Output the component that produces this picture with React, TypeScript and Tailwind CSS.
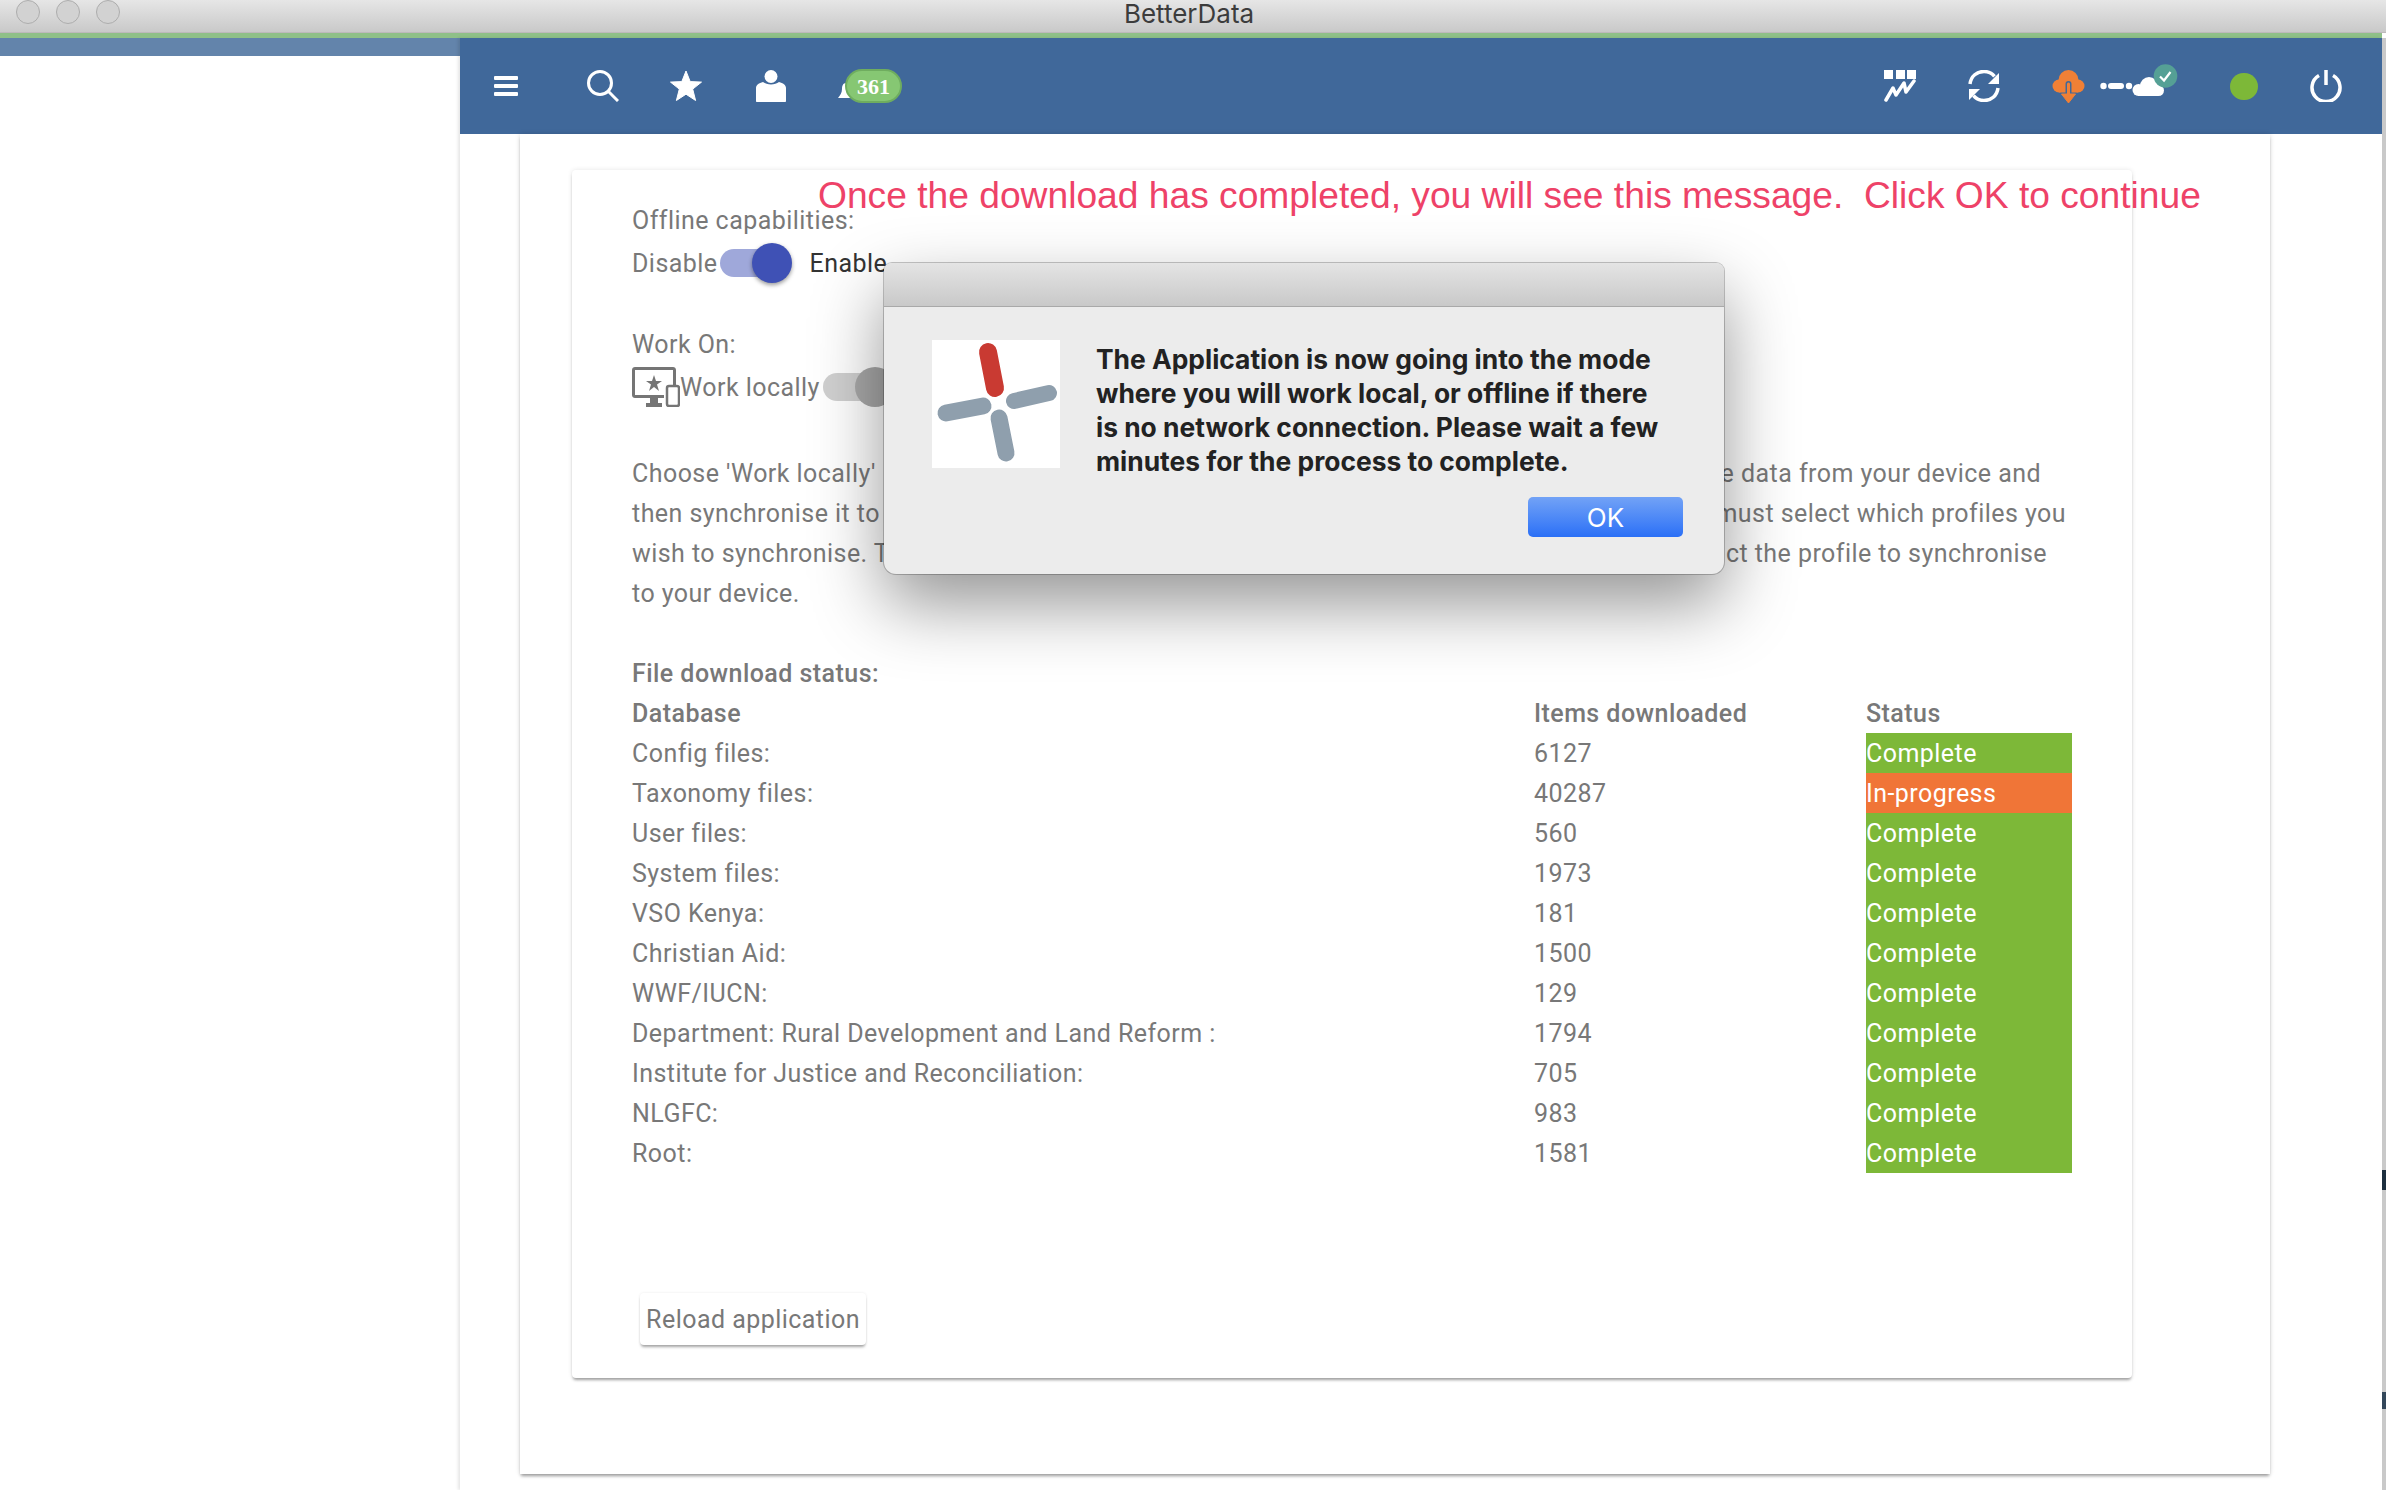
const files = [
  { name: "Config files:", count: "6127", done: true },
  { name: "Taxonomy files:", count: "40287", done: false },
  { name: "User files:", count: "560", done: true },
  { name: "System files:", count: "1973", done: true },
  { name: "VSO Kenya:", count: "181", done: true },
  { name: "Christian Aid:", count: "1500", done: true },
  { name: "WWF/IUCN:", count: "129", done: true },
  { name: "Department: Rural Development and Land Reform :", count: "1794", done: true },
  { name: "Institute for Justice and Reconciliation:", count: "705", done: true },
  { name: "NLGFC:", count: "983", done: true },
  { name: "Root:", count: "1581", done: true },
]

function MenuIcon() {
  return (
    <svg width="24" height="20" viewBox="0 0 24 20" fill="#fff">
      <rect x="0" y="0" width="24" height="4" rx="1" />
      <rect x="0" y="8" width="24" height="4" rx="1" />
      <rect x="0" y="16" width="24" height="4" rx="1" />
    </svg>
  )
}

function SearchIcon() {
  return (
    <svg width="32" height="32" viewBox="0 0 32 32" fill="none" stroke="#fff" strokeWidth="3">
      <circle cx="13" cy="13" r="11.5" />
      <path d="M21 21l10 10" />
    </svg>
  )
}

function StarIcon() {
  return (
    <svg width="32" height="32" viewBox="0 0 32 32" fill="#fff" stroke="#fff" strokeWidth="1" strokeLinejoin="round">
      <path d="M16 1l4.200 10.600 11.300.5-8.800 7 2.900 11.400L16 24.200 6.400 30.500l2.900-11.400-8.800-7 11.300-.5z" />
    </svg>
  )
}

function UserIcon() {
  return (
    <svg width="32" height="32" viewBox="0 0 32 32" fill="#fff">
      <circle cx="16" cy="6.500" r="6.500" />
      <path d="M1 31V18c0-3 3-5 7-6 2 1.500 5 2.500 8 2.500s6-1 8-2.500c4 1 7 3 7 6v13c0 .6-.4 1-1 1H2c-.6 0-1-.4-1-1z" />
    </svg>
  )
}

function ChartIcon() {
  return (
    <svg width="32" height="32" viewBox="0 0 32 32" fill="none">
      <rect x="0" y="0" width="9" height="9" fill="#fff" />
      <rect x="12" y="0" width="9" height="9" fill="#fff" />
      <rect x="23" y="0" width="9" height="9" fill="#fff" />
      <path d="M2 30l7-12 3 7 8-12 2 9 8-11" stroke="#fff" strokeWidth="3.500" strokeLinejoin="round" strokeLinecap="round" />
    </svg>
  )
}

function SyncIcon() {
  return (
    <svg width="32" height="32" viewBox="0 0 32 32" fill="none">
      <path d="M2 14C3 6 9 1.500 16 1.500c4.500 0 8 1.800 10.500 4.800" stroke="#fff" strokeWidth="3.500" />
      <path d="M30 18c-1 8-7 12.500-14 12.500-4.500 0-8-1.800-10.500-4.800" stroke="#fff" strokeWidth="3.500" />
      <path d="M31 3v11H20z" fill="#fff" />
      <path d="M1 30V19h11z" fill="#fff" />
    </svg>
  )
}

function DownloadCloud() {
  return (
    <svg width="33" height="33" viewBox="0 0 33 33">
      <circle cx="7" cy="16" r="6.500" fill="#f08036" />
      <circle cx="16.500" cy="10" r="10" fill="#f08036" />
      <circle cx="26" cy="16" r="6.500" fill="#f08036" />
      <rect x="7" y="14" width="19" height="8.500" fill="#f08036" />
      <path d="M16.500 14v10" stroke="#40689a" strokeWidth="6" strokeLinecap="round" />
      <path d="M16.500 14v12" stroke="#f08036" strokeWidth="3" strokeLinecap="round" />
      <path d="M9.500 24h14l-7 9z" fill="#f08036" stroke="#f08036" strokeWidth="1" strokeLinejoin="round" />
    </svg>
  )
}

function LinkCloud() {
  return (
    <svg width="78" height="40" viewBox="0 0 78 40" className="overflow-visible">
      <circle cx="3.500" cy="20" r="3.200" fill="#fff" />
      <rect x="8" y="17" width="16" height="6" rx="3" fill="#fff" />
      <circle cx="29" cy="20" r="3.200" fill="#fff" />
      <circle cx="38.500" cy="24" r="6" fill="#fff" />
      <circle cx="49" cy="20" r="9" fill="#fff" />
      <circle cx="58.500" cy="24.500" r="5.500" fill="#fff" />
      <rect x="38" y="22" width="20" height="8" fill="#fff" />
      <circle cx="65.500" cy="10" r="11.800" fill="#55a095" />
      <path d="M60 10.500l4 4 6.500-8.500" fill="none" stroke="#fff" strokeWidth="2.200" />
    </svg>
  )
}

function PowerIcon() {
  return (
    <svg width="32" height="32" viewBox="0 0 32 32" fill="none" stroke="#fff" strokeWidth="3.500">
      <path d="M9 5.500a14 14 0 1 0 14 0" />
      <path d="M16 0v15" />
    </svg>
  )
}

function DeviceIcon() {
  return (
    <svg width="48" height="40" viewBox="0 0 48 40" className="shrink-0">
      <path d="M3 0h38c1.700 0 3 1.300 3 3v15h-3V3H3v25h29v3H3c-1.700 0-3-1.300-3-3V3c0-1.700 1.300-3 3-3z" fill="#757575" />
      <path d="M22 8l2 6h6l-5 3.500 2 6.500-5-4-5 4 2-6.500-5-3.500h6z" fill="#757575" />
      <rect x="18" y="31" width="8" height="5" fill="#757575" />
      <rect x="14" y="36" width="16" height="4" fill="#757575" />
      <rect x="35" y="19" width="12" height="20" rx="2" fill="#fff" stroke="#757575" strokeWidth="2.500" />
    </svg>
  )
}

function Logo() {
  return (
    <svg width="128" height="128" viewBox="0 0 128 128" className="shrink-0 bg-white" strokeLinecap="round">
      <path d="M56 12l7 36" stroke="#c93a32" strokeWidth="18" />
      <path d="M82 61l35-8" stroke="#8f9fad" strokeWidth="16" />
      <path d="M14 73l37-7" stroke="#8f9fad" strokeWidth="17" />
      <path d="M67 78l7 35" stroke="#8f9fad" strokeWidth="17" />
    </svg>
  )
}

export default function App() {
  return (
    <div className="relative flex h-[1490px] w-[2386px] flex-col overflow-hidden bg-white font-['Roboto',sans-serif] text-[25px] tracking-[0.45px] text-[#787878]">
      {/* window title bar */}
      <div className="relative flex h-[33px] shrink-0 items-start justify-center border-b border-[#bdb9bb] bg-gradient-to-b from-[#e6e6e6] to-[#c9c9c9] pr-[8px]">
        <div className="absolute left-4 top-0 flex gap-4">
          <span className="h-6 w-6 rounded-full border border-[#adadad] bg-[#d2d2d2]" />
          <span className="h-6 w-6 rounded-full border border-[#adadad] bg-[#d2d2d2]" />
          <span className="h-6 w-6 rounded-full border border-[#adadad] bg-[#d2d2d2]" />
        </div>
        <span className="font-['Inter',sans-serif] text-[26px] leading-[27px] tracking-normal text-[#3c3c3c]">BetterData</span>
      </div>
      <div className="h-[5px] w-[2382px] shrink-0 bg-[#8fc088]" />

      <div className="flex min-h-0 flex-1">
        {/* sidebar */}
        <div className="w-[460px] shrink-0">
          <div className="h-[18px] bg-[#6384ab]" />
        </div>

        <div className="flex w-[1922px] shrink-0 flex-col shadow-[-2px_0_3px_rgba(0,0,0,0.1)]">
          {/* top bar */}
          <div className="flex h-[96px] shrink-0 items-center bg-[#40689a] pl-[34px] pr-[40px]">
            <MenuIcon />
            <div className="ml-[69px]"><SearchIcon /></div>
            <div className="ml-[51px]"><StarIcon /></div>
            <div className="ml-[53px]"><UserIcon /></div>
            <div className="relative ml-[51px] h-[34px] w-[64px]">
              <svg width="16" height="18" viewBox="0 0 16 18" className="absolute left-0 top-[14px]" fill="#fff">
                <path d="M8 0c-3 0-4 3-4 6 0 4-2 6-4 9h16V0z" />
              </svg>
              <span className="absolute left-[7px] top-0 flex h-[34px] w-[57px] items-center justify-center rounded-full border-2 border-[#6fad5f] bg-[#86c773] font-['Liberation_Serif',serif] text-[22px] font-bold tracking-normal text-white">
                361
              </span>
            </div>
            <div className="ml-auto"><ChartIcon /></div>
            <div className="ml-[52px]"><SyncIcon /></div>
            <div className="ml-[52px]"><DownloadCloud /></div>
            <div className="ml-[15px]"><LinkCloud /></div>
            <span className="ml-[52px] h-[27px] w-[28px] rounded-full bg-[#7db838]" />
            <div className="ml-[52px]"><PowerIcon /></div>
          </div>

          {/* outer page card */}
          <div className="ml-[60px] h-[1340px] w-[1750px] shrink-0 bg-white pl-[52px] pt-[36px] shadow-[0_3px_3px_-1px_rgba(0,0,0,0.35),0_0_5px_rgba(0,0,0,0.14)]">
            <div className="h-[1208px] w-[1560px] rounded-[4px] bg-white pl-[60px] pr-[60px] pt-[30px] shadow-[0_3px_3px_-1px_rgba(0,0,0,0.35),0_0_5px_rgba(0,0,0,0.1)]">
              <div className="h-10 leading-[42px]">Offline capabilities:</div>
              <div className="mt-[3px] flex h-10 items-center">
                <span className="pt-[2px]">Disable</span>
                <div className="relative ml-[2px] h-[28px] w-[68px] rounded-full bg-[#9fa8da]">
                  <span className="absolute left-[32px] top-[-6px] h-10 w-10 rounded-full bg-[#3f51b5] shadow-[0_2px_4px_rgba(0,0,0,0.4)]" />
                </div>
                <span className="ml-[22px] pt-[2px] text-[#333]">Enable</span>
              </div>

              <div className="mt-[41px] h-10 leading-[42px]">Work On:</div>
              <div className="mt-[3px] flex h-10 items-center">
                <DeviceIcon />
                <span className="pt-[2px]">Work locally</span>
                <div className="relative ml-[3px] h-[28px] w-[68px] rounded-full bg-[#d0d0d0]">
                  <span className="absolute left-[32px] top-[-6px] h-10 w-10 rounded-full bg-[#a9a9a9]" />
                </div>
              </div>

              <div className="mt-[46px] leading-[42px]">
                <div className="flex h-10"><span>Choose 'Work locally'</span><span className="ml-auto pr-[31px]">e data from your device and</span></div>
                <div className="flex h-10"><span>then synchronise it to</span><span className="ml-auto pr-[6px]">must select which profiles you</span></div>
                <div className="flex h-10"><span>wish to synchronise. T</span><span className="ml-auto pr-[25px]">ct the profile to synchronise</span></div>
                <div className="h-10">to your device.</div>
              </div>

              <div className="mt-[40px] h-10 font-medium leading-[42px]">File download status:</div>
              <div className="grid grid-cols-[902px_332px_206px] leading-[42px]">
                <div className="h-10 font-medium">Database</div>
                <div className="h-10 font-medium">Items downloaded</div>
                <div className="h-10 font-medium">Status</div>
                {files.map((file) => [
                  <div key={file.name} className="h-10 whitespace-nowrap">{file.name}</div>,
                  <div key={`${file.name}-count`} className="h-10">{file.count}</div>,
                  <div
                    key={`${file.name}-status`}
                    className={file.done ? "h-10 bg-[#7db838] text-white" : "h-10 bg-[#f07537] text-white"}
                  >
                    {file.done ? "Complete" : "In-progress"}
                  </div>,
                ])}
              </div>

              <button className="ml-[8px] mt-[120px] h-[52px] w-[226px] whitespace-nowrap rounded-[4px] bg-white pt-[2px] text-center shadow-[0_3px_3px_-1px_rgba(0,0,0,0.35),0_0_3px_rgba(0,0,0,0.08)]">
                Reload application
              </button>
            </div>
          </div>
        </div>

        {/* scrollbar sliver of the window behind */}
        <div className="relative w-[4px] shrink-0 bg-[#c9c9c9]">
          <span className="absolute left-0 top-[1132px] h-5 w-full bg-[#1d2f3f]" />
          <span className="absolute left-0 top-[1354px] h-[17px] w-full bg-[#33475a]" />
        </div>
      </div>

      {/* annotation over the screenshot */}
      <div className="absolute left-[818px] top-[170px] whitespace-pre font-['Liberation_Sans',sans-serif] text-[37.2px] leading-[50px] tracking-normal text-[#ee4268]">
        {"Once the download has completed, you will see this message.  Click OK to continue"}
      </div>

      {/* macOS alert */}
      <div className="absolute left-[884px] top-[263px] h-[311px] w-[840px] overflow-hidden rounded-b-[12px] rounded-t-[8px] bg-[#ececec] shadow-[0_0_0_1px_rgba(0,0,0,0.22),0_30px_70px_rgba(0,0,0,0.42)]">
        <div className="h-[44px] border-b border-[#a9a9a9] bg-gradient-to-b from-[#e4e4e4] to-[#c9c9c9]" />
        <div className="flex pl-[48px] pt-[33px]">
          <Logo />
          <p className="ml-[36px] w-[600px] pt-[2px] font-['Inter',sans-serif] text-[26.4px] font-bold leading-[34px] tracking-normal text-[#222]">
            The Application is now going into the mode
            <br />
            where you will work local, or offline if there
            <br />
            is no network connection. Please wait a few
            <br />
            minutes for the process to complete.
          </p>
        </div>
        <div className="flex justify-end pr-[41px] pt-[19px]">
          <button className="h-[40px] w-[155px] rounded-[5px] bg-gradient-to-b from-[#72a2f6] to-[#2a6ff6] font-['Inter',sans-serif] text-[26px] tracking-normal text-white">
            OK
          </button>
        </div>
      </div>
    </div>
  )
}
